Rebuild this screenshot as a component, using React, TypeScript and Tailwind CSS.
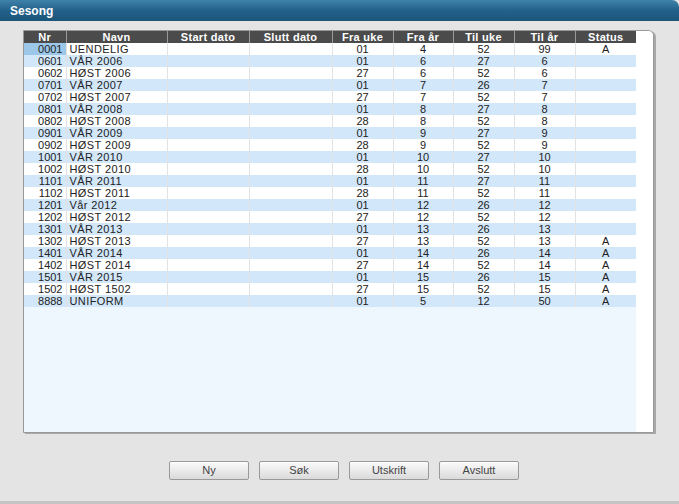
import React from 'react'

type Row = {
  nr: string
  navn: string
  fraUke: string
  fraAr: string
  tilUke: string
  tilAr: string
  status: string
}

const rows: Row[] = [
  { nr: '0001', navn: 'UENDELIG', fraUke: '01', fraAr: '4', tilUke: '52', tilAr: '99', status: 'A' },
  { nr: '0601', navn: 'VÅR 2006', fraUke: '01', fraAr: '6', tilUke: '27', tilAr: '6', status: '' },
  { nr: '0602', navn: 'HØST 2006', fraUke: '27', fraAr: '6', tilUke: '52', tilAr: '6', status: '' },
  { nr: '0701', navn: 'VÅR 2007', fraUke: '01', fraAr: '7', tilUke: '26', tilAr: '7', status: '' },
  { nr: '0702', navn: 'HØST 2007', fraUke: '27', fraAr: '7', tilUke: '52', tilAr: '7', status: '' },
  { nr: '0801', navn: 'VÅR 2008', fraUke: '01', fraAr: '8', tilUke: '27', tilAr: '8', status: '' },
  { nr: '0802', navn: 'HØST 2008', fraUke: '28', fraAr: '8', tilUke: '52', tilAr: '8', status: '' },
  { nr: '0901', navn: 'VÅR 2009', fraUke: '01', fraAr: '9', tilUke: '27', tilAr: '9', status: '' },
  { nr: '0902', navn: 'HØST 2009', fraUke: '28', fraAr: '9', tilUke: '52', tilAr: '9', status: '' },
  { nr: '1001', navn: 'VÅR 2010', fraUke: '01', fraAr: '10', tilUke: '27', tilAr: '10', status: '' },
  { nr: '1002', navn: 'HØST 2010', fraUke: '28', fraAr: '10', tilUke: '52', tilAr: '10', status: '' },
  { nr: '1101', navn: 'VÅR 2011', fraUke: '01', fraAr: '11', tilUke: '27', tilAr: '11', status: '' },
  { nr: '1102', navn: 'HØST 2011', fraUke: '28', fraAr: '11', tilUke: '52', tilAr: '11', status: '' },
  { nr: '1201', navn: 'Vår 2012', fraUke: '01', fraAr: '12', tilUke: '26', tilAr: '12', status: '' },
  { nr: '1202', navn: 'HØST 2012', fraUke: '27', fraAr: '12', tilUke: '52', tilAr: '12', status: '' },
  { nr: '1301', navn: 'VÅR 2013', fraUke: '01', fraAr: '13', tilUke: '26', tilAr: '13', status: '' },
  { nr: '1302', navn: 'HØST 2013', fraUke: '27', fraAr: '13', tilUke: '52', tilAr: '13', status: 'A' },
  { nr: '1401', navn: 'VÅR 2014', fraUke: '01', fraAr: '14', tilUke: '26', tilAr: '14', status: 'A' },
  { nr: '1402', navn: 'HØST 2014', fraUke: '27', fraAr: '14', tilUke: '52', tilAr: '14', status: 'A' },
  { nr: '1501', navn: 'VÅR 2015', fraUke: '01', fraAr: '15', tilUke: '26', tilAr: '15', status: 'A' },
  { nr: '1502', navn: 'HØST 1502', fraUke: '27', fraAr: '15', tilUke: '52', tilAr: '15', status: 'A' },
  { nr: '8888', navn: 'UNIFORM', fraUke: '01', fraAr: '5', tilUke: '12', tilAr: '50', status: 'A' },
]

const columns = [
  { label: 'Nr', w: 'w-[42px]' },
  { label: 'Navn', w: 'w-[101px]' },
  { label: 'Start dato', w: 'w-[82px]' },
  { label: 'Slutt dato', w: 'w-[83px]' },
  { label: 'Fra uke', w: 'w-[61px]' },
  { label: 'Fra år', w: 'w-[60px]' },
  { label: 'Til uke', w: 'w-[61px]' },
  { label: 'Til år', w: 'w-[61px]' },
  { label: 'Status', w: 'w-[61px]' },
]

const buttons = ['Ny', 'Søk', 'Utskrift', 'Avslutt']

export default function App() {
  return (
    <div className="w-[679px] h-[504px] bg-[#e4e4e4] font-['Liberation_Sans',Arial,sans-serif] flex flex-col overflow-hidden border-b-[3px] border-[#c4c4c4]">
      {/* Title bar */}
      <div className="h-[21px] shrink-0 rounded-tr-[7px] bg-gradient-to-b from-[#3f82a9] via-[#22618a] to-[#1b5579] flex items-center pl-[10px]">
        <span className="text-white text-[12px] font-bold leading-none">Sesong</span>
      </div>

      {/* Grid frame */}
      <div className="pt-[9px] pl-[23px]">
        <div className="w-[631px] h-[403px] border border-[#999] rounded-tr-[6px] bg-white flex shadow-[2px_1px_0_#a8a8a8] overflow-hidden">
          <div className="w-[612px] h-full bg-[#eef6fe]">
            <table className="table-fixed border-collapse w-[612px] text-[11px] leading-[12px]">
              <thead>
                <tr className="h-[12px] bg-[#4b4b4b]">
                  {columns.map((c, i) => (
                    <th
                      key={c.label}
                      className={`${c.w} p-0 text-center font-bold text-white tracking-[0.3px] ${
                        i > 0 ? 'border-l border-[#9a9a9a]' : ''
                      }`}
                    >
                      {c.label}
                    </th>
                  ))}
                </tr>
              </thead>
              <tbody className="text-[#222] leading-[11px]">
                {rows.map((r, i) => (
                  <tr key={r.nr} className={`h-[12px] ${i % 2 === 0 ? 'bg-white' : 'bg-[#d3e7fa]'}`}>
                    <td className={`p-0 pt-[1px] pr-[3px] text-right ${i === 0 ? 'bg-[#9cc7e8]' : ''}`}>{r.nr}</td>
                    <td className="p-0 pt-[1px] pl-[3px] text-left border-l border-[#e2e2e2] tracking-[0.4px] whitespace-nowrap">{r.navn}</td>
                    <td className="p-0 border-l border-[#e2e2e2]"></td>
                    <td className="p-0 border-l border-[#e2e2e2]"></td>
                    <td className="p-0 pt-[1px] text-center border-l border-[#e2e2e2]">{r.fraUke}</td>
                    <td className="p-0 pt-[1px] text-center border-l border-[#e2e2e2]">{r.fraAr}</td>
                    <td className="p-0 pt-[1px] text-center border-l border-[#e2e2e2]">{r.tilUke}</td>
                    <td className="p-0 pt-[1px] text-center border-l border-[#e2e2e2]">{r.tilAr}</td>
                    <td className="p-0 pt-[1px] text-center border-l border-[#e2e2e2]">{r.status}</td>
                  </tr>
                ))}
              </tbody>
            </table>
          </div>
          <div className="flex-1 bg-white"></div>
        </div>
      </div>

      {/* Buttons */}
      <div className="mt-[28px] pl-[169px] flex gap-[10px]">
        {buttons.map((b) => (
          <button
            key={b}
            className="w-[80px] h-[19px] border border-[#9a9a9a] rounded-[2px] bg-gradient-to-b from-[#fbfbfb] to-[#dadada] text-[11px] text-[#444] leading-none shadow-[0_1px_0_#fff_inset]"
          >
            {b}
          </button>
        ))}
      </div>
    </div>
  )
}
